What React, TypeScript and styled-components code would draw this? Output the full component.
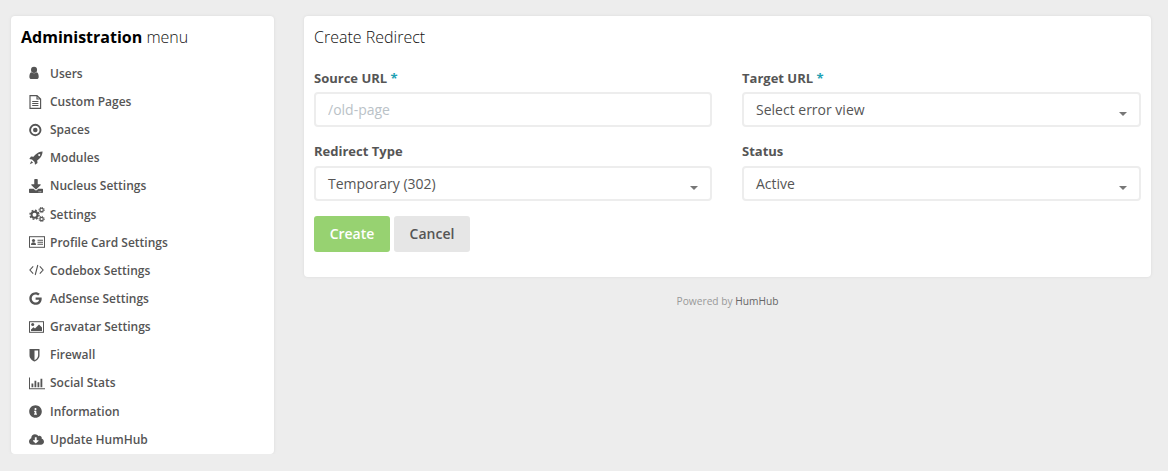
import React from "react";
import styled, { createGlobalStyle } from "styled-components";
import { FaDownload, FaGoogle, FaInfoCircle, FaCloudDownloadAlt } from "react-icons/fa";

const Global = createGlobalStyle`
  html, body { margin: 0; padding: 0; background: #ededed; }
  * { box-sizing: border-box; }
  body { font-family: "Open Sans", "Liberation Sans", sans-serif; color: #555; }
`;

const Page = styled.div`
  display: grid;
  grid-template-columns: 263px 847px;
  column-gap: 30px;
  padding: 16px 0 0 11px;
  align-items: start;
`;

const Panel = styled.section`
  background: #fff;
  border-radius: 4px;
  box-shadow: 0 0 3px #dadada;
`;

const Sidebar = styled(Panel)`
  height: 438px;
  padding: 10px 10px 0;
`;

const SideTitle = styled.h2`
  margin: 0 0 11.3px;
  font-size: 16px;
  line-height: 22px;
  font-weight: 700;
  color: #000;
  strong { font-weight: 700; }
  span { font-weight: 300; color: #111; }
`;

const Menu = styled.ul`
  list-style: none;
  margin: 0;
  padding: 0;
`;

const MenuItem = styled.li`
  display: flex;
  align-items: center;
  height: 28.15px;
  padding-left: 8px;
  font-size: 12px;
  font-weight: 600;
  color: #555;
`;

const IconSlot = styled.span`
  display: flex;
  align-items: center;
  width: 21px;
  flex: none;
  color: #555;
  svg { display: block; }
`;

const Main = styled.div`
  display: flex;
  flex-direction: column;
`;

const FormPanel = styled(Panel)`
  height: 261px;
  padding: 10px;
`;

const PanelTitle = styled.h1`
  margin: 0;
  font-size: 16px;
  line-height: 22px;
  font-weight: 300;
  color: #111;
`;

const FormGrid = styled.div`
  display: grid;
  grid-template-columns: 398px 399px;
  column-gap: 30px;
  row-gap: 16px;
  margin-top: 22px;
`;

const Field = styled.div`
  display: flex;
  flex-direction: column;
`;

const Label = styled.label`
  font-size: 13px;
  line-height: 16px;
  font-weight: 700;
  color: #555;
  margin-bottom: 6.4px;
  em { font-style: normal; color: #21a1b3; }
`;

const TextInput = styled.input`
  height: 35px;
  border: 2px solid #ededed;
  border-radius: 4px;
  padding: 0 12px;
  font: 400 14px "Open Sans", sans-serif;
  color: #555;
  outline: none;
  &::placeholder { color: #bac2c7; opacity: 1; }
`;

const SelectBox = styled.div`
  height: 35px;
  display: flex;
  align-items: center;
  justify-content: space-between;
  border: 2px solid #ededed;
  border-radius: 4px;
  padding: 0 12px;
  font-size: 14px;
  color: #555;
`;

const Caret = styled.i`
  width: 0;
  height: 0;
  margin-top: 9px;
  border-left: 4px solid transparent;
  border-right: 4px solid transparent;
  border-top: 4px solid #777;
`;

const Actions = styled.div`
  display: flex;
  gap: 4px;
  margin-top: 15px;
`;

const Button = styled.button<{ $primary?: boolean }>`
  height: 36px;
  width: 76px;
  border: 0;
  border-radius: 3px;
  font: 600 14px "Open Sans", sans-serif;
  background: ${p => (p.$primary ? "#97d271" : "#e6e6e6")};
  color: ${p => (p.$primary ? "#fff" : "#555")};
`;

const Footer = styled.div`
  text-align: center;
  margin-top: 17px;
  font-size: 10.2px;
  line-height: 14px;
  color: #999;
  strong { font-weight: 400; color: #666; }
`;

const S = { width: 14, height: 14, viewBox: "0 0 14 14", fill: "currentColor" };

const UserIcon = () => (
  <svg {...S} width={11} viewBox="0 0 12 14">
    <circle cx="5.5" cy="3.6" r="3.3" />
    <path d="M0.4 11.3c0-3 .8-4.9 2.2-5.2 .8.7 1.8 1.1 2.9 1.1s2.100-.4 2.900-1.100c1.400.3 2.200 2.200 2.200 5.200 0 1.400-.9 2.300-2.100 2.300H2.500c-1.200 0-2.100-.9-2.100-2.300z" />
  </svg>
);
const FileIcon = () => (
  <svg {...S} width={13} viewBox="0 0 13 14" fill="none" stroke="currentColor" strokeWidth="1.150">
    <path d="M1 .6h7l3.600 3.400v9.400H1z M8 .6V4h3.600 M3.200 6.500h6.200 M3.200 8.500h6.200 M3.200 10.500h6.200" />
  </svg>
);
const DotCircleIcon = () => (
  <svg {...S} width={13} viewBox="0 0 13 14">
    <circle cx="6.300" cy="7" r="5.200" fill="none" stroke="currentColor" strokeWidth="1.900" />
    <circle cx="6.300" cy="7" r="2.300" />
  </svg>
);
const RocketIcon = () => (
  <svg {...S}>
    <path
      fillRule="evenodd"
      d="M13.600.4C10.500.6 8 1.800 6 4L4.500 5.800 2 5.500.3 8l2.700.4 2.600 2.600.4 2.700 2.500-1.700-.3-2.500L10 8c2.200-2 3.400-4.500 3.600-7.600z M10.200 3a1 1 0 1 0 .01 0z"
    />
    <path d="M.8 13.300l1.500-3.300 1.800 1.800z" />
  </svg>
);
const CogsIcon = () => (
  <svg width={16} height={15} viewBox="0 0 16 15" fill="none" stroke="currentColor">
    <circle cx="5.500" cy="7.800" r="3" strokeWidth="2" />
    <circle cx="5.500" cy="7.800" r="4.500" strokeWidth="1.500" strokeDasharray="1.800 1.730" />
    <circle cx="12.600" cy="2.900" r="1.700" strokeWidth="1.200" />
    <circle cx="12.600" cy="2.900" r="2.700" strokeWidth="1" strokeDasharray="1.100 1.020" />
    <circle cx="12.600" cy="12" r="1.700" strokeWidth="1.200" />
    <circle cx="12.600" cy="12" r="2.700" strokeWidth="1" strokeDasharray="1.100 1.020" />
  </svg>
);
const IdCardIcon = () => (
  <svg {...S} width={16} viewBox="0 0 16 14">
    <rect x=".5" y="1.700" width="15" height="10.600" fill="none" stroke="currentColor" />
    <circle cx="4.500" cy="5.500" r="1.600" />
    <path d="M2 10c0-1.800.8-2.700 2.500-2.700S7 8.200 7 10z M8.500 4.700h5.500v1H8.500z M8.500 6.700h5.500v1H8.500z M8.500 8.700h5.500v1H8.500z" />
  </svg>
);
const CodeIcon = () => (
  <svg {...S} width={15} viewBox="0 0 15 14" fill="none" stroke="currentColor" strokeWidth="1.100">
    <path d="M4.200 3.300L.9 7l3.300 3.700 M10.800 3.300L14.100 7l-3.300 3.700 M8.800 2L6.200 12" />
  </svg>
);
const PictureIcon = () => (
  <svg {...S} width={15} viewBox="0 0 15 14">
    <rect x=".5" y="1.700" width="14" height="10.600" fill="none" stroke="currentColor" />
    <circle cx="3.700" cy="4.600" r="1.500" />
    <path d="M2 11v-1.500l2.500-2.300 1.500 1.300 4-4 3 3V11z" />
  </svg>
);
const ShieldIcon = () => (
  <svg {...S} width={11} viewBox="0 0 11 14">
    <path fillRule="evenodd" d="M.5 1h10v6.500c0 3.200-3.200 5.300-5 6-1.800-.7-5-2.800-5-6z M5.500 2.400v9.800c1.500-.8 3.600-2.400 3.600-4.700V2.400z" />
  </svg>
);
const ChartIcon = () => (
  <svg {...S} width={16} viewBox="0 0 16 14">
    <path d="M0 1.500h1v10.800h15v1H0z M2.500 7.500h1.800v3.800H2.500z M5.500 4.700h1.800v6.600H5.500z M8.500 6.200h1.800v5.100H8.500z M11.500 2.700h1.800v8.600h-1.800z" />
  </svg>
);

const items: [React.ReactNode, string][] = [
  [<UserIcon />, "Users"],
  [<FileIcon />, "Custom Pages"],
  [<DotCircleIcon />, "Spaces"],
  [<RocketIcon />, "Modules"],
  [<FaDownload size={14} />, "Nucleus Settings"],
  [<CogsIcon />, "Settings"],
  [<IdCardIcon />, "Profile Card Settings"],
  [<CodeIcon />, "Codebox Settings"],
  [<FaGoogle size={13} />, "AdSense Settings"],
  [<PictureIcon />, "Gravatar Settings"],
  [<ShieldIcon />, "Firewall"],
  [<ChartIcon />, "Social Stats"],
  [<FaInfoCircle size={13} />, "Information"],
  [<FaCloudDownloadAlt size={15} />, "Update HumHub"],
];

export default function App() {
  return (
    <>
      <Global />
      <Page>
        <Sidebar>
          <SideTitle>
            <strong>Administration</strong> <span>menu</span>
          </SideTitle>
          <Menu>
            {items.map(([icon, label]) => (
              <MenuItem key={label}>
                <IconSlot>{icon}</IconSlot>
                {label}
              </MenuItem>
            ))}
          </Menu>
        </Sidebar>
        <Main>
          <FormPanel>
            <PanelTitle>Create Redirect</PanelTitle>
            <FormGrid>
              <Field>
                <Label>Source URL <em>*</em></Label>
                <TextInput placeholder="/old-page" />
              </Field>
              <Field>
                <Label>Target URL <em>*</em></Label>
                <SelectBox>Select error view<Caret /></SelectBox>
              </Field>
              <Field>
                <Label>Redirect Type</Label>
                <SelectBox>Temporary (302)<Caret /></SelectBox>
              </Field>
              <Field>
                <Label>Status</Label>
                <SelectBox>Active<Caret /></SelectBox>
              </Field>
            </FormGrid>
            <Actions>
              <Button $primary>Create</Button>
              <Button>Cancel</Button>
            </Actions>
          </FormPanel>
          <Footer>Powered by <strong>HumHub</strong></Footer>
        </Main>
      </Page>
    </>
  );
}
